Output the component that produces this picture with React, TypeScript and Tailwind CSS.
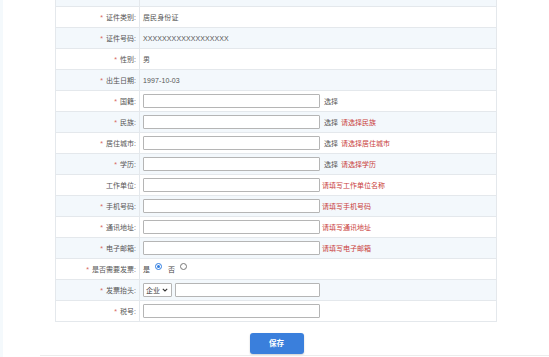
import React from "react";

type Row = {
  label: string;
  req?: boolean;
  kind: "text" | "input" | "radio" | "select" | "blank";
  value?: string;
  choose?: boolean;
  hint?: string;
};

const rows: Row[] = [
  { label: "", kind: "blank" },
  { label: "证件类别", req: true, kind: "text", value: "居民身份证" },
  { label: "证件号码", req: true, kind: "text", value: "XXXXXXXXXXXXXXXXXX" },
  { label: "性别", req: true, kind: "text", value: "男" },
  { label: "出生日期", req: true, kind: "text", value: "1997-10-03" },
  { label: "国籍", req: true, kind: "input", choose: true },
  { label: "民族", req: true, kind: "input", choose: true, hint: "请选择民族" },
  { label: "居住城市", req: true, kind: "input", choose: true, hint: "请选择居住城市" },
  { label: "学历", req: true, kind: "input", choose: true, hint: "请选择学历" },
  { label: "工作单位", kind: "input", hint: "请填写工作单位名称" },
  { label: "手机号码", req: true, kind: "input", hint: "请填写手机号码" },
  { label: "通讯地址", req: true, kind: "input", hint: "请填写通讯地址" },
  { label: "电子邮箱", req: true, kind: "input", hint: "请填写电子邮箱" },
  { label: "是否需要发票", req: true, kind: "radio" },
  { label: "发票抬头", req: true, kind: "select" },
  { label: "税号", req: true, kind: "input" },
];

function Input({ w = "w-[177px]" }: { w?: string }) {
  return <div className={`${w} h-[14px] border border-[#b5b5b5] bg-white rounded-[1px] shrink-0`} />;
}

function Value({ r }: { r: Row }) {
  if (r.kind === "text") return <span className="text-[#555] tracking-[0.1px]">{r.value}</span>;
  if (r.kind === "blank") return null;
  if (r.kind === "radio")
    return (
      <div className="flex items-center text-[#444]">
        <span>是</span>
        <span className="ml-[5px] -mt-[5px] w-[7px] h-[7px] rounded-full bg-white border-[1.5px] border-[#2f7de1] flex items-center justify-center">
          <span className="w-[3px] h-[3px] rounded-full bg-[#2f7de1]" />
        </span>
        <span className="ml-[6px]">否</span>
        <span className="ml-[5px] -mt-[5px] w-[7px] h-[7px] rounded-full bg-white border border-[#777]" />
      </div>
    );
  if (r.kind === "select")
    return (
      <div className="flex items-center">
        <div className="w-[29px] h-[14px] border border-[#b5b5b5] bg-white rounded-[1px] flex items-center pl-[2px] text-[#333]">
          <span>企业</span>
          <svg width="6" height="4" viewBox="0 0 6 4" className="ml-[2px]">
            <path d="M0.8 0.8 L3 3 L5.2 0.8" stroke="#333" strokeWidth="1.1" fill="none" />
          </svg>
        </div>
        <div className="ml-[3px]">
          <Input w="w-[145px]" />
        </div>
      </div>
    );
  return (
    <div className="flex items-center">
      <Input />
      {r.choose && <span className="ml-[4px] text-[#555]">选择</span>}
      {r.hint && (
        <span className={`${r.choose ? "ml-[3px]" : "ml-[2px]"} text-[#c9403a]`}>{r.hint}</span>
      )}
    </div>
  );
}

export default function App() {
  return (
    <div
      className="w-[549px] h-[357px] overflow-hidden bg-white relative text-[7px] leading-none"
      style={{ fontFamily: '"Liberation Sans", "Noto Sans CJK SC", sans-serif' }}
    >
      <div className="absolute left-0 top-0 w-[3px] h-full bg-[#f4f9fc]" />
      <div className="flex flex-col">
        <div className="ml-[55px] w-[442px] -mt-[14px] border-x border-[#e4e8ec]">
          {rows.map((r, i) => (
            <div
              key={i}
              className={`flex h-[21px] border-b border-[#e4e8ec] ${i % 2 === 0 ? "bg-[#f3f8fc]" : "bg-white"}`}
            >
              <div className="w-[84px] shrink-0 border-r border-[#e4e8ec] flex items-center justify-end pr-[3px] text-[#555]">
                {r.label && (
                  <>
                    {r.req && <span className="text-[#d66560] mr-[3px]">*</span>}
                    <span>{r.label}:</span>
                  </>
                )}
              </div>
              <div className="flex-1 flex items-center pl-[3px]">
                <Value r={r} />
              </div>
            </div>
          ))}
        </div>
        <div className="flex justify-center mt-[11px] pl-[4px]">
          <button className="w-[54px] h-[21px] rounded-[3px] bg-[#3a7fdc] text-white font-bold text-[7.5px] shadow-[0_1px_2px_rgba(0,0,0,0.2)]">
            保存
          </button>
        </div>
      </div>
      <div className="absolute left-[40px] right-0 bottom-[1px] h-px bg-[#ececec]" />
    </div>
  );
}
